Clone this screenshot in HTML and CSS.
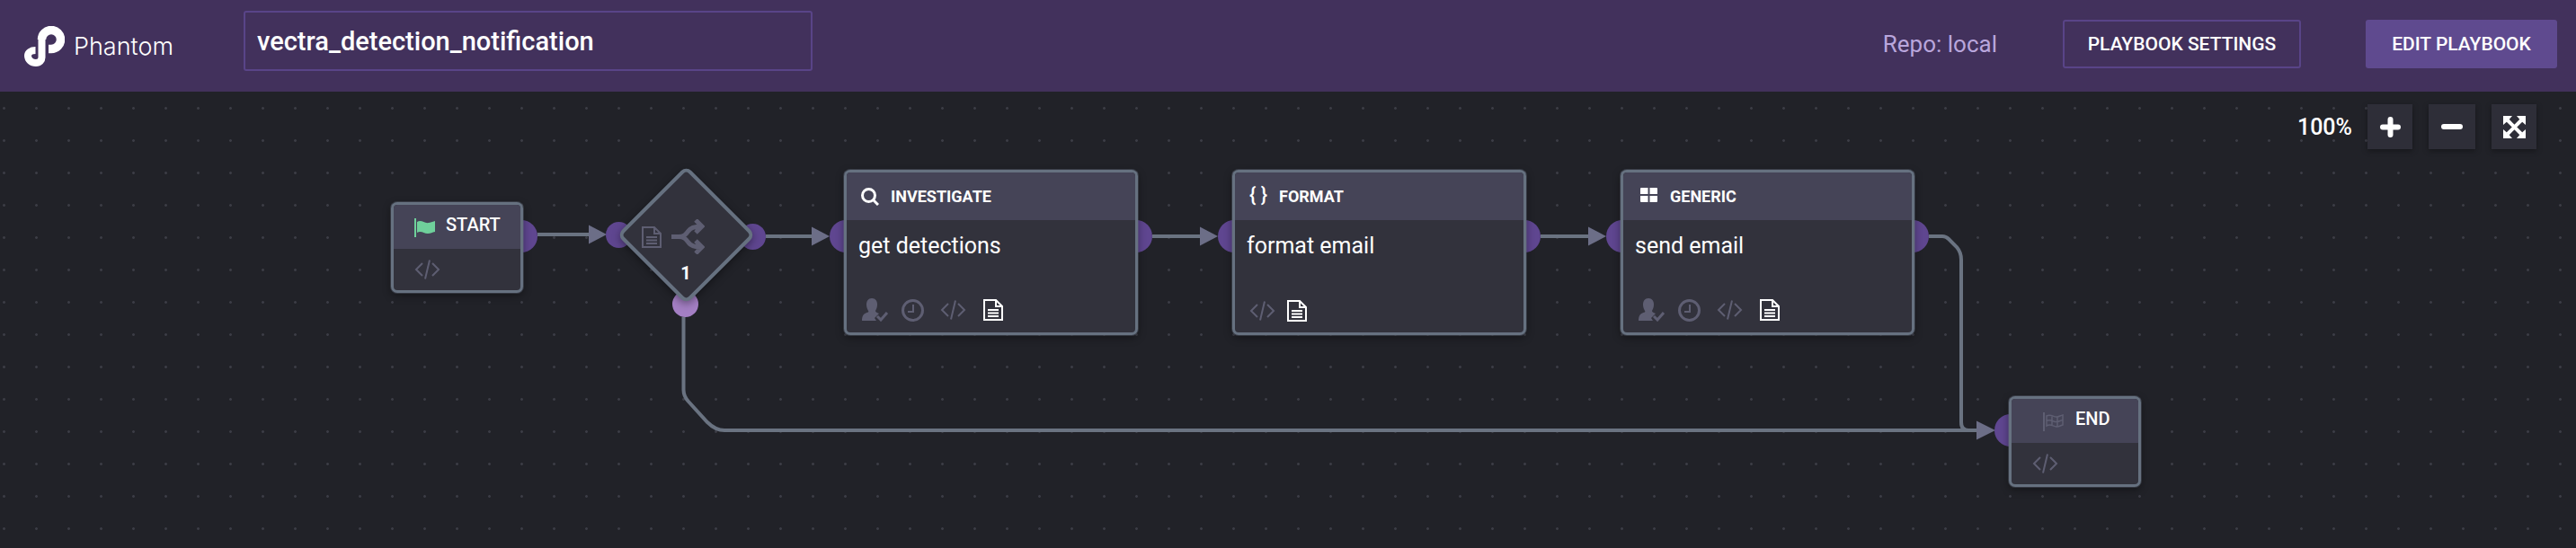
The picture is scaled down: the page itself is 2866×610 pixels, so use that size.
FILE: index.html
```html
<!DOCTYPE html>
<html lang="en">
<head>
  <meta charset="UTF-8" />
  <title>vectra_detection_notification</title>
  <link rel="stylesheet" href="styles.css">
</head>
<body>

  <svg class="defs" width="0" height="0">
    <symbol id="icon-doc" viewBox="0 0 22 24">
      <path d="M1 1H14L21 8V23H1Z M14 1V8H21 M5 12H17 M5 15.5H17 M5 19H17" fill="none" stroke="currentColor" stroke-width="2"/>
    </symbol>
    <symbol id="icon-code" viewBox="0 0 29 22">
      <path d="M9 4L2 11L9 18 M20 4L27 11L20 18 M17 0.5L12 21.5" fill="none" stroke="currentColor" stroke-width="2"/>
    </symbol>
    <symbol id="icon-clock" viewBox="0 0 25 25">
      <circle cx="12.5" cy="12.5" r="11" fill="none" stroke="currentColor" stroke-width="3"/>
      <path d="M13 6V14H7" fill="none" stroke="currentColor" stroke-width="2"/>
    </symbol>
    <symbol id="icon-user" viewBox="0 0 29 26">
      <path d="M11 0C15 0 17 3 17 7C17 10 16 12 15 14C15 15 16 16 19 17L14 22L16 25H0C0 19 2 17 7 15.5C7.500 15 7.500 14.500 7 14C6 12 5 10 5 7C5 3 7 0 11 0Z" fill="currentColor"/>
      <path d="M17 20L21 24L28 16" fill="none" stroke="currentColor" stroke-width="3"/>
    </symbol>
  </svg>

  <header class="topbar">
    <div class="brand">
      <svg class="brand-logo" viewBox="26 25 46 45" width="46" height="45">
        <path d="M46.500 40A10.500 10.500 0 1 1 57 50.500H54" fill="none" stroke="#fff" stroke-width="9.500"/>
        <path d="M46.500 40V60C46.500 63 44 66 40 66C35 66 31 62.500 31 58C31 54.500 34.500 52 39.500 52" fill="none" stroke="#fff" stroke-width="8"/>
      </svg>
      <span class="brand-name">Phantom</span>
    </div>
    <div class="title-box">vectra_detection_notification</div>
    <div class="topbar-right">
      <span class="repo">Repo: local</span>
      <button class="btn btn-outline">PLAYBOOK SETTINGS</button>
      <button class="btn btn-solid">EDIT PLAYBOOK</button>
    </div>
  </header>

  <main class="canvas">

    <svg class="edges" viewBox="0 102 2866 508" width="2866" height="508">
      <path class="edge" d="M598 261H657"/>
      <polygon class="head" points="655,250.500 675,261 655,271.500"/>
      <path class="edge" d="M852 263H905"/>
      <polygon class="head" points="903,252.500 923,263 903,273.500"/>
      <path class="edge" d="M1282 263H1337"/>
      <polygon class="head" points="1335,252.500 1355,263 1335,273.500"/>
      <path class="edge" d="M1714 263H1769"/>
      <polygon class="head" points="1767,252.500 1787,263 1767,273.500"/>
      <path class="edge" d="M2146 263H2161Q2165 263 2168 266L2177 275Q2182 281 2182 289V470Q2182 479 2190 479H2201"/>
      <path class="edge" d="M760.500 353V434Q760.500 441 766 447L787 470Q796 479 806 479H2201"/>
      <polygon class="head" points="2199,468.500 2220,479 2199,489.500"/>
    </svg>

    <div class="zoom-tools">
      <span class="zoom-level">100%</span>
      <button class="zoom-btn">
        <svg width="23" height="23" viewBox="0 0 23 23"><path d="M11.500 3V20M3 11.500H20" stroke="#fff" stroke-width="6" stroke-linecap="round"/></svg>
      </button>
      <button class="zoom-btn zoom-btn-wide">
        <svg width="24" height="8" viewBox="0 0 24 8"><path d="M3 4H21" stroke="#fff" stroke-width="6" stroke-linecap="round"/></svg>
      </button>
      <button class="zoom-btn">
        <svg width="25" height="25" viewBox="0 0 25 25">
          <path d="M5 5L20 20M20 5L5 20" stroke="#fff" stroke-width="4"/>
          <path d="M0 0H10L7 3.500L3.500 7L0 10Z M25 0H15L18 3.500L21.500 7L25 10Z M0 25H10L7 21.500L3.500 18L0 15Z M25 25H15L18 21.500L21.500 18L25 15Z" fill="#fff"/>
        </svg>
      </button>
    </div>

    <div class="node node-small node-start">
      <span class="port port-out-small"></span>
      <div class="node-head">
        <svg class="flag" width="23" height="21" viewBox="0 0 23 21">
          <path d="M1 0V21" stroke="#6fd09b" stroke-width="2"/>
          <path d="M3 4C8 1 11 6 16 5C19 4.500 21 3.500 23 3V15C20 15.500 18 17 15 17C10 17 8 13 3 16Z" fill="#6fd09b"/>
        </svg>
        <span class="node-kind-plain">START</span>
      </div>
      <div class="node-foot-small">
        <svg class="ico-code muted"><use href="#icon-code"/></svg>
      </div>
    </div>

    <div class="decision">
      <span class="port-round port-round-left"></span>
      <span class="port-round port-round-right"></span>
      <span class="port-round port-round-bottom"></span>
      <div class="decision-shape"></div>
      <div class="decision-body">
        <div class="decision-icons">
          <svg class="ico-doc muted"><use href="#icon-doc"/></svg>
          <svg class="branch" width="37" height="39" viewBox="0 0 37 39">
            <path d="M0 19.500H8C14 19.500 16 17 19 13C21 10 24 8 33 8M0 19.500H8C14 19.500 16 22 19 26C21 29 24 31 33 31M27 1L34 8L27 15M27 24L34 31L27 38" fill="none" stroke="#5e5e72" stroke-width="5"/>
          </svg>
        </div>
        <span class="decision-count">1</span>
      </div>
    </div>

    <div class="node node-investigate">
      <span class="port port-in"></span>
      <span class="port port-out"></span>
      <div class="node-head">
        <svg class="kind-search" width="20" height="20" viewBox="0 0 20 20">
          <circle cx="8.500" cy="8.500" r="7" fill="none" stroke="#fff" stroke-width="3"/>
          <path d="M13.500 13.500L19 19" stroke="#fff" stroke-width="3"/>
        </svg>
        <span class="node-kind">INVESTIGATE</span>
      </div>
      <div class="node-body">
        <div class="node-name">get detections</div>
        <div class="node-foot">
          <svg class="ico-user muted"><use href="#icon-user"/></svg>
          <svg class="ico-clock muted"><use href="#icon-clock"/></svg>
          <svg class="ico-code muted"><use href="#icon-code"/></svg>
          <svg class="ico-doc"><use href="#icon-doc"/></svg>
        </div>
      </div>
    </div>

    <div class="node node-format">
      <span class="port port-in"></span>
      <span class="port port-out"></span>
      <div class="node-head">
        <span class="kind-braces">{ }</span>
        <span class="node-kind">FORMAT</span>
      </div>
      <div class="node-body">
        <div class="node-name">format email</div>
        <div class="node-foot node-foot-tight">
          <svg class="ico-code muted"><use href="#icon-code"/></svg>
          <svg class="ico-doc"><use href="#icon-doc"/></svg>
        </div>
      </div>
    </div>

    <div class="node node-generic">
      <span class="port port-in"></span>
      <span class="port port-out"></span>
      <div class="node-head">
        <svg class="kind-grid" width="19" height="16" viewBox="0 0 19 16">
          <path d="M1 0H8.500V7H0V1Q0 0 1 0Z M10.500 0H18Q19 0 19 1V7H10.500Z M0 9H8.500V16H1Q0 16 0 15Z M10.500 9H19V15Q19 16 18 16H10.500Z" fill="#fff"/>
        </svg>
        <span class="node-kind">GENERIC</span>
      </div>
      <div class="node-body">
        <div class="node-name">send email</div>
        <div class="node-foot">
          <svg class="ico-user muted"><use href="#icon-user"/></svg>
          <svg class="ico-clock muted"><use href="#icon-clock"/></svg>
          <svg class="ico-code muted"><use href="#icon-code"/></svg>
          <svg class="ico-doc"><use href="#icon-doc"/></svg>
        </div>
      </div>
    </div>

    <div class="node node-small node-end">
      <span class="port port-in-small"></span>
      <div class="node-head">
        <svg class="flag" width="23" height="21" viewBox="0 0 23 21">
          <path d="M1 0V21" stroke="#5e5e72" stroke-width="2"/>
          <path d="M4 4C9 1 12 6 16 5C18 4.500 20 3.500 22 3V14C20 14.500 18 16 15 16C11 16 9 12 4 15Z M4 9.500C9 7 12 11.500 16 10.500C18 10 20 9 22 8.500 M10 4V14.500 M16 5V16" fill="none" stroke="#5e5e72" stroke-width="1.500"/>
        </svg>
        <span class="node-kind-plain">END</span>
      </div>
      <div class="node-foot-small">
        <svg class="ico-code muted"><use href="#icon-code"/></svg>
      </div>
    </div>

  </main>

</body>
</html>
```

FILE: styles.css
```css
* {
  margin: 0;
  padding: 0;
  box-sizing: border-box;
}

html, body {
  height: 100%;
  font-family: Roboto, Arial, sans-serif;
  color: #fff;
  overflow: hidden;
}

body {
  background: #212228;
}

.defs {
  position: absolute;
}

/* top bar */
.topbar {
  height: 102px;
  background: #42315c;
  display: flex;
  align-items: center;
  padding: 0 21px 0 26px;
}

.brand {
  width: 245px;
  display: flex;
  align-items: center;
  flex-shrink: 0;
}

.brand-logo {
  flex-shrink: 0;
}

.brand-name {
  margin-left: 10px;
  font-family: Inter, sans-serif;
  font-weight: 300;
  font-size: 27px;
}

.title-box {
  width: 633px;
  height: 67px;
  margin-top: -11px;
  padding-left: 13px;
  border: 2px solid #594488;
  border-radius: 3px;
  display: flex;
  align-items: center;
  font-size: 29px;
  font-weight: 500;
}

.topbar-right {
  margin-left: auto;
  display: flex;
  align-items: center;
  margin-top: -4px;
}

.repo {
  font-size: 26px;
  color: #b9a6dc;
  margin-right: 73px;
}

.btn {
  height: 54px;
  font-family: Roboto, Arial, sans-serif;
  font-size: 21px;
  font-weight: 500;
  color: #fff;
  border-radius: 3px;
}

.btn-outline {
  width: 265px;
  background: none;
  border: 2px solid #594488;
  margin-right: 72px;
}

.btn-solid {
  width: 213px;
  background: #5f4a8f;
  border: none;
}

/* canvas */
.canvas {
  position: relative;
  z-index: 0;
  height: 508px;
  background-color: #212228;
  background-image: radial-gradient(circle at 4.5px 18.5px, #3b3c45 1.2px, transparent 1.6px);
  background-size: 36px 36px;
}

.edges {
  position: absolute;
  left: 0;
  top: 0;
  z-index: -1;
}

.edge {
  fill: none;
  stroke: #6a7381;
  stroke-width: 4;
}

.head {
  fill: #6c6e87;
}

.zoom-tools {
  position: absolute;
  top: 14px;
  right: 44px;
  display: flex;
  align-items: center;
  gap: 18px;
}

.zoom-level {
  font-size: 25px;
  font-weight: 500;
  margin-right: -1px;
}

.zoom-btn {
  width: 50px;
  height: 50px;
  background: #2e2e38;
  border: none;
  box-shadow: 0 2px 6px rgba(0, 0, 0, 0.35);
  display: flex;
  align-items: center;
  justify-content: center;
}

.zoom-btn-wide {
  width: 52px;
}

/* nodes */
.node {
  position: absolute;
  width: 327px;
  height: 184px;
  top: 87px;
  background: #32323c;
  border: 3px solid #667180;
  border-radius: 7px;
  box-shadow: 0 0 0 1px rgba(102, 113, 128, 0.35), 0 3px 10px rgba(0, 0, 0, 0.4);
  display: flex;
  flex-direction: column;
}

.node-small {
  width: 147px;
  height: 101px;
}

.node-start {
  left: 435px;
  top: 123px;
}

.node-investigate {
  left: 939px;
}

.node-format {
  left: 1371px;
}

.node-generic {
  left: 1803px;
}

.node-end {
  left: 2235px;
  top: 339px;
}

.port {
  position: absolute;
  z-index: -1;
  top: 53px;
  width: 36px;
  height: 36px;
  border-radius: 50%;
  background: #5f4690;
}

.port-in {
  left: -19px;
}

.port-out {
  right: -19px;
}

.port-out-small {
  position: absolute;
  z-index: -1;
  top: 17px;
  right: -19px;
  width: 36px;
  height: 36px;
  border-radius: 50%;
  background: #5f4690;
}

.port-in-small {
  position: absolute;
  z-index: -1;
  top: 17px;
  left: -19px;
  width: 36px;
  height: 36px;
  border-radius: 50%;
  background: #5f4690;
}

.node-head {
  height: 53px;
  flex-shrink: 0;
  background: #454457;
  border-radius: 4px 4px 0 0;
  display: flex;
  align-items: center;
  padding-left: 16px;
}

.node-small .node-head {
  height: 49px;
  padding-bottom: 5px;
  padding-left: 23px;
}

.node-small.node-end .node-head {
  padding-left: 35px;
}

.flag {
  flex-shrink: 0;
  margin-right: 12px;
  margin-top: 6px;
}

.node-end .flag {
  margin-right: 13px;
}

.node-kind-plain {
  font-size: 20px;
  font-weight: 500;
}

.node-kind {
  font-size: 18px;
  font-weight: 700;
}

.kind-search {
  margin-right: 13px;
}

.kind-grid {
  margin-left: 3px;
  margin-right: 14px;
  margin-bottom: 4px;
}

.kind-braces {
  width: 33px;
  font-size: 22px;
  font-weight: 500;
  margin-bottom: 4px;
}

.node-body {
  flex: 1;
  padding: 12px 0 12px 13px;
  display: flex;
  flex-direction: column;
}

.node-name {
  font-size: 25px;
  line-height: 34px;
}

.node-foot {
  margin-top: auto;
  margin-left: 4px;
  display: flex;
  align-items: center;
}

.node-foot-tight {
  margin-left: 3px;
}

.node-foot-small {
  flex: 1;
  padding: 12px 0 0 23px;
}

.muted {
  color: #5e5e72;
}

.ico-code {
  width: 29px;
  height: 22px;
  flex-shrink: 0;
}

.ico-doc {
  width: 22px;
  height: 24px;
  flex-shrink: 0;
  color: #fff;
}

.ico-doc.muted {
  color: #5e5e72;
}

.ico-clock {
  width: 25px;
  height: 25px;
  flex-shrink: 0;
  margin: 0 18px 0 15px;
}

.ico-user {
  width: 29px;
  height: 26px;
  flex-shrink: 0;
}

.ico-code + .ico-doc {
  margin-left: 19px;
}

.node-foot-tight .ico-code + .ico-doc {
  margin-left: 13px;
}

/* decision diamond */
.decision {
  position: absolute;
  left: 689px;
  top: 85px;
  width: 148px;
  height: 148px;
}

.decision-shape {
  position: absolute;
  left: 19.5px;
  top: 19.5px;
  width: 109px;
  height: 109px;
  background: #32323c;
  border: 4px solid #667180;
  border-radius: 8px;
  transform: rotate(45deg);
  box-shadow: 2px 2px 10px rgba(0, 0, 0, 0.4);
}

.decision-body {
  position: absolute;
  inset: 0;
  padding: 57px 0 0 25px;
}

.decision-icons {
  display: flex;
  align-items: center;
  gap: 11px;
}

.decision-count {
  position: absolute;
  left: 0;
  right: 0;
  top: 105px;
  text-align: center;
  font-size: 20px;
  font-weight: 700;
}

.port-round {
  position: absolute;
  z-index: -1;
  width: 29px;
  height: 29px;
  border-radius: 50%;
  background: #5f4690;
}

.port-round-left {
  left: -15px;
  top: 59.5px;
}

.port-round-right {
  left: 134px;
  top: 61.5px;
}

.port-round-bottom {
  left: 58.5px;
  top: 137px;
  background: #a47fc4;
}
```
